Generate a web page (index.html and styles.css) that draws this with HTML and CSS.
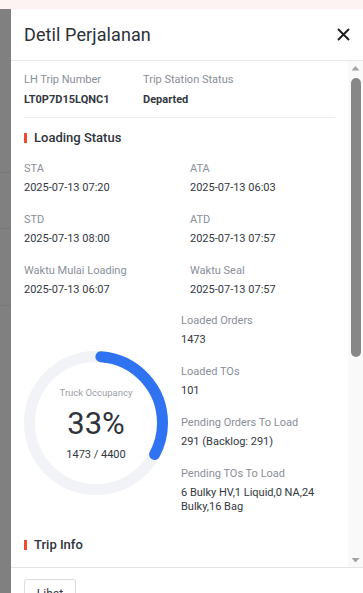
FILE: index.html
```html
<!DOCTYPE html>
<html>
<head>
<meta charset="utf-8">
<link rel="stylesheet" href="styles.css">
</head>
<body>
<div class="topstrip"></div>
<div class="stage">
  <div class="backdrop">
    <div class="bd-line l1"></div>
    <div class="bd-line l2"></div>
    <div class="bd-line l3"></div>
  </div>
  <div class="drawer">
    <div class="drawer-head">
      <div class="title">Detil Perjalanan</div>
      <svg class="close" width="13" height="13" viewBox="0 0 13 13"><path d="M1 1 L12 12 M12 1 L1 12" stroke="#1f1f1f" stroke-width="1.9" fill="none"/></svg>
    </div>
    <div class="drawer-body">
      <div class="content">
        <div class="trip-row">
          <div class="field">
            <div class="label">LH Trip Number</div>
            <div class="value bold">LT0P7D15LQNC1</div>
          </div>
          <div class="field">
            <div class="label">Trip Station Status</div>
            <div class="value bold">Departed</div>
          </div>
        </div>
        <div class="divider"></div>

        <div class="section-title"><span class="bar"></span>Loading Status</div>
        <div class="grid">
          <div class="cell"><div class="label">STA</div><div class="value">2025-07-13 07:20</div></div>
          <div class="cell"><div class="label">ATA</div><div class="value">2025-07-13 06:03</div></div>
          <div class="cell"><div class="label">STD</div><div class="value">2025-07-13 08:00</div></div>
          <div class="cell"><div class="label">ATD</div><div class="value">2025-07-13 07:57</div></div>
          <div class="cell"><div class="label">Waktu Mulai Loading</div><div class="value">2025-07-13 06:07</div></div>
          <div class="cell"><div class="label">Waktu Seal</div><div class="value">2025-07-13 07:57</div></div>
        </div>

        <div class="occupancy">
          <div class="donut">
            <svg width="144" height="144" viewBox="0 0 144 144">
              <circle cx="72" cy="72" r="66.5" fill="none" stroke="#f2f3f7" stroke-width="11"/>
              <circle cx="72" cy="72" r="66.5" fill="none" stroke="#2f73f2" stroke-width="11" stroke-linecap="round" stroke-dasharray="132 300" stroke-dashoffset="-5" transform="rotate(-90 72 72)"/>
            </svg>
            <div class="donut-text">
              <div class="d-label">Truck Occupancy</div>
              <div class="d-pct">33%</div>
              <div class="d-count">1473 / 4400</div>
            </div>
          </div>
          <div class="stats">
            <div class="stat"><div class="label">Loaded Orders</div><div class="value">1473</div></div>
            <div class="stat"><div class="label">Loaded TOs</div><div class="value">101</div></div>
            <div class="stat"><div class="label">Pending Orders To Load</div><div class="value">291 (Backlog: 291)</div></div>
            <div class="stat"><div class="label">Pending TOs To Load</div><div class="value">6 Bulky HV,1 Liquid,0 NA,24 Bulky,16 Bag</div></div>
          </div>
        </div>

        <div class="section-title trip"><span class="bar"></span>Trip Info</div>
      </div>
      <div class="scrollbar">
        <svg class="arrow" width="15" height="14" viewBox="0 0 15 14"><path d="M3.5 9.5 L11.5 9.5 L7.5 5 Z" fill="#a3a3a3"/></svg>
        <div class="track"><div class="thumb"></div></div>
        <svg class="arrow" width="15" height="14" viewBox="0 0 15 14"><path d="M3.5 5 L11.5 5 L7.5 9.5 Z" fill="#a3a3a3"/></svg>
      </div>
    </div>
    <div class="drawer-foot">
      <button class="btn">Lihat</button>
    </div>
  </div>
</div>
</body>
</html>
```

FILE: styles.css
```css
* { box-sizing: border-box; }
html, body {
  margin: 0;
  padding: 0;
  width: 363px;
  height: 593px;
  overflow: hidden;
  font-family: Roboto, "Noto Sans", Arial, sans-serif;
  color: #333841;
}
.topstrip {
  height: 9px;
  background: #fdf3f2;
}
.stage {
  display: flex;
  height: 584px;
}
.backdrop {
  width: 11px;
  flex: none;
  background: #808080;
  position: relative;
}
.bd-line {
  position: absolute;
  left: 0;
  right: 0;
  height: 1px;
  background: #777;
}
.l1 { top: 163px; }
.l2 { top: 219px; }
.l3 { top: 296px; }
.drawer {
  flex: 1;
  background: #fff;
  display: flex;
  flex-direction: column;
  min-width: 0;
}
.drawer-head {
  height: 52px;
  flex: none;
  border-bottom: 1px solid #e6e7ec;
  display: flex;
  align-items: center;
  justify-content: space-between;
  padding: 0 13px 0 13px;
}
.title {
  font-size: 18px;
  color: #2b3039;
  letter-spacing: 0.1px;
}
.drawer-body {
  flex: 1;
  display: flex;
  min-height: 0;
  overflow: hidden;
}
.content {
  flex: 1;
  min-width: 0;
  padding: 11px 13px 0 13px;
  overflow: hidden;
}
.scrollbar {
  width: 15px;
  flex: none;
  background: #f9f9f9;
  display: flex;
  flex-direction: column;
}
.arrow { display: block; flex: none; }
.track {
  flex: 1;
  padding: 3px 2px 0 3px;
}
.thumb {
  width: 10px;
  height: 279px;
  border-radius: 5px;
  background: #878787;
}
.label {
  font-size: 11px;
  line-height: 16px;
  color: #8a8e99;
}
.value {
  font-size: 11px;
  line-height: 14px;
  color: #333841;
  margin-top: 4px;
}
.bold { font-weight: 700; margin-top: 5px; }
.trip-row {
  display: flex;
}
.trip-row .field:first-child { width: 119px; }
.divider {
  height: 1px;
  background: #eceef2;
  margin-top: 10px;
}
.section-title {
  display: flex;
  align-items: center;
  font-size: 13px;
  font-weight: 500;
  line-height: 20px;
  color: #2f333b;
  margin-top: 10px;
}
.section-title .bar {
  width: 3px;
  height: 10px;
  background: #ee4d2d;
  margin-right: 7px;
}
.section-title.trip { margin-top: 21px; }
.grid {
  display: grid;
  grid-template-columns: 166px 1fr;
  row-gap: 17px;
  margin-top: 13px;
}
.occupancy {
  display: flex;
  margin-top: 16px;
}
.donut {
  width: 144px;
  height: 144px;
  margin-top: 38px;
  position: relative;
  flex: none;
}
.donut svg { display: block; }
.donut-text {
  position: absolute;
  left: 0;
  top: 0;
  width: 144px;
  text-align: center;
}
.d-label {
  font-size: 9.5px;
  color: #9a9ea8;
  margin-top: 36px;
  line-height: 12px;
}
.d-pct {
  font-size: 31px;
  line-height: 36px;
  color: #2f333b;
  margin-top: 7px;
}
.d-count {
  font-size: 11px;
  line-height: 14px;
  color: #333841;
  margin-top: 6px;
}
.stats {
  margin-left: 13px;
  display: flex;
  flex-direction: column;
  gap: 17px;
  min-width: 0;
}
.drawer-foot {
  height: 26px;
  flex: none;
  border-top: 1px solid #e3e4ea;
  padding: 11px 13px 0 13px;
  overflow: hidden;
}
.btn {
  display: block;
  width: 52px;
  height: 30px;
  border: 1px solid #d9dbe1;
  border-radius: 3px;
  background: #fff;
  font-family: Roboto, Arial, sans-serif;
  font-size: 12px;
  color: #333841;
  padding: 0;
  line-height: 28px;
}
```
